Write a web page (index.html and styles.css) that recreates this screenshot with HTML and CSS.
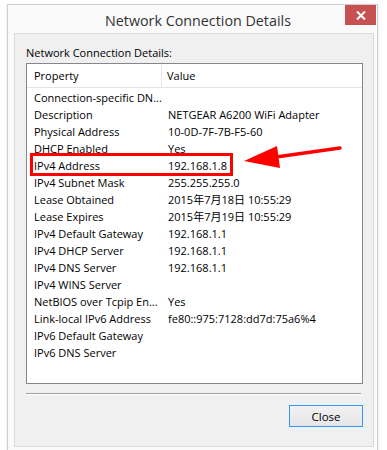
FILE: index.html
```html
<!DOCTYPE html>
<html lang="en">
<head>
    <meta charset="UTF-8">
    <title>Network Connection Details</title>
    <link rel="stylesheet" href="styles.css">
</head>
<body>
    <div class="window">
        <div class="title-bar">
            <span class="title">Network Connection Details</span>
            <button class="close-x" title="Close">
                <svg width="10" height="9" viewBox="0 0 10 9"><path d="M1 0.5 L9 8.5 M9 0.5 L1 8.5" stroke="#fff" stroke-width="2"/></svg>
            </button>
        </div>
        <div class="panel">
            <p class="label">Network Connection Details:</p>
            <div class="listview">
                <div class="row header">
                    <span class="col-prop">Property</span>
                    <span class="col-val">Value</span>
                </div>
                <div class="rows" id="rows"></div>
                <div class="highlight"></div>
                <svg class="arrow" width="100" height="30" viewBox="0 0 100 30">
                    <path d="M96 4 L32 13" stroke="#f00" stroke-width="3.5" stroke-linecap="round"/>
                    <polygon points="0,17 33,2 36,24" fill="#f00"/>
                </svg>
            </div>
            <div class="separator"></div>
            <div class="buttons">
                <button class="btn">Close</button>
            </div>
        </div>
    </div>

    <script>
        const details = [
            ["Connection-specific DN...", ""],
            ["Description", "NETGEAR A6200 WiFi Adapter"],
            ["Physical Address", "10-0D-7F-7B-F5-60"],
            ["DHCP Enabled", "Yes"],
            ["IPv4 Address", "192.168.1.8"],
            ["IPv4 Subnet Mask", "255.255.255.0"],
            ["Lease Obtained", "2015年7月18日 10:55:29"],
            ["Lease Expires", "2015年7月19日 10:55:29"],
            ["IPv4 Default Gateway", "192.168.1.1"],
            ["IPv4 DHCP Server", "192.168.1.1"],
            ["IPv4 DNS Server", "192.168.1.1"],
            ["IPv4 WINS Server", ""],
            ["NetBIOS over Tcpip En...", "Yes"],
            ["Link-local IPv6 Address", "fe80::975:7128:dd7d:75a6%4"],
            ["IPv6 Default Gateway", ""],
            ["IPv6 DNS Server", ""]
        ];

        const rows = document.getElementById('rows');
        details.forEach(([prop, val]) => {
            const row = document.createElement('div');
            row.className = 'row';
            row.innerHTML = '<span class="col-prop"></span><span class="col-val"></span>';
            row.children[0].textContent = prop;
            row.children[1].textContent = val;
            rows.appendChild(row);
        });
    </script>
</body>
</html>
```

FILE: styles.css
```css
body {
    margin: 0;
    background: #fff;
    font-family: 'Open Sans', 'Noto Sans CJK SC', sans-serif;
    color: #000;
}
.window {
    margin: 4px 0 0 7px;
    width: 360px;
    height: 442px;
    border: 1px solid #cfcfcf;
    background: #fafafa;
    box-shadow: 0 1px 3px rgba(0, 0, 0, 0.12);
    display: flex;
    flex-direction: column;
    padding: 0 3px 6px 6px;
    box-sizing: content-box;
}
.title-bar {
    position: relative;
    height: 28px;
    display: flex;
    align-items: center;
    justify-content: center;
}
.title {
    font-size: 14.3px;
    color: #333;
    margin-top: 2px;
    margin-left: 8px;
}
.close-x {
    position: absolute;
    top: 0;
    right: -2px;
    width: 31px;
    height: 20px;
    border: none;
    padding: 0;
    background: #c75050;
    display: flex;
    align-items: center;
    justify-content: center;
}
.panel {
    flex: 1;
    background: #f0f0f0;
    border: 1px solid #dadada;
    padding: 0 10px 0 11px;
    display: flex;
    flex-direction: column;
}
.label {
    margin: 11px 0 3px 0;
    font-size: 11px;
    line-height: 15px;
}
.listview {
    position: relative;
    height: 319px;
    background: #fff;
    border: 1px solid #828790;
    font-size: 11px;
}
.row {
    display: flex;
    height: 17px;
    line-height: 17px;
    white-space: nowrap;
}
.header {
    height: 23px;
    line-height: 24px;
    border-bottom: 1px solid #e5e5e5;
    margin-bottom: 1px;
}
.col-prop {
    width: 134px;
    padding-left: 7px;
    flex-shrink: 0;
}
.header .col-prop {
    border-right: 1px solid #e5e5e5;
    width: 127px;
}
.header .col-val {
    padding-left: 5px;
}
.highlight {
    position: absolute;
    left: 3px;
    top: 89px;
    width: 197px;
    height: 17px;
    border: 3px solid #f00;
}
.arrow {
    position: absolute;
    left: 217px;
    top: 80px;
}
.separator {
    margin: 9px 2px 0 0;
    border-top: 1px solid #a0a0a0;
    border-bottom: 1px solid #fff;
}
.buttons {
    display: flex;
    justify-content: flex-end;
    margin-top: 10px;
}
.btn {
    width: 74px;
    height: 22px;
    border: 1px solid #3399ff;
    background: linear-gradient(#f2f2f2, #e5e5e5);
    font-family: 'Open Sans', sans-serif;
    font-size: 11.5px;
    color: #000;
    padding: 0;
}
```
